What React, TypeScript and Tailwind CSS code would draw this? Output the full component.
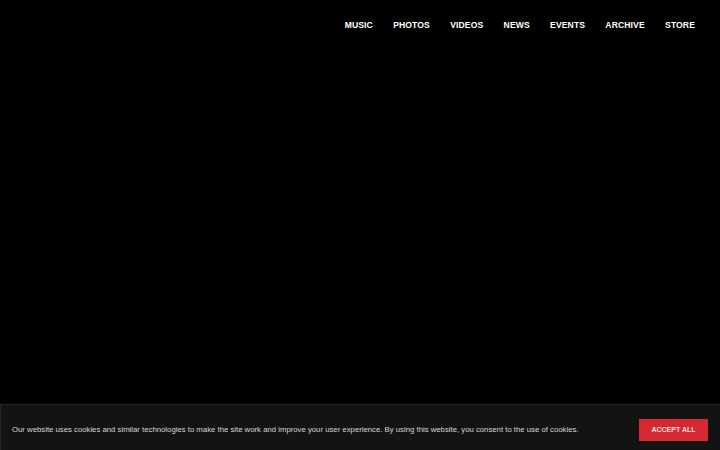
import React from "react";

const navItems = ["MUSIC", "PHOTOS", "VIDEOS", "NEWS", "EVENTS", "ARCHIVE", "STORE"];

const App: React.FC = () => {
  return (
    <div
      className="relative w-[720px] h-[450px] bg-black overflow-hidden"
      style={{ fontFamily: '"Liberation Sans", Arial, sans-serif' }}
    >
      <header className="flex justify-end pt-[20px] pr-[25px]">
        <nav className="flex gap-[20.3px]">
          {navItems.map((item) => (
            <a
              key={item}
              href="#"
              className="text-white text-[8.6px] font-bold leading-[11px] tracking-[0.1px]"
            >
              {item}
            </a>
          ))}
        </nav>
      </header>

      {/* cookie consent bar */}
      <div className="absolute left-0 right-0 top-[404px] h-[52px] bg-[#131313] border-t border-l border-[#262626] flex items-start justify-between pt-[14px] pl-[11px] pr-[12px]">
        <p className="text-[#d6d6d6] text-[7.75px] leading-[22px]">
          Our website uses cookies and similar technologies to make the site work and improve your user experience. By using this website, you consent to the use of cookies.
        </p>
        <button className="w-[69px] h-[22px] bg-[#d62a33] text-[#f4dede] text-[7px] font-bold flex items-center justify-center">
          ACCEPT ALL
        </button>
      </div>
    </div>
  );
};

export default App;
